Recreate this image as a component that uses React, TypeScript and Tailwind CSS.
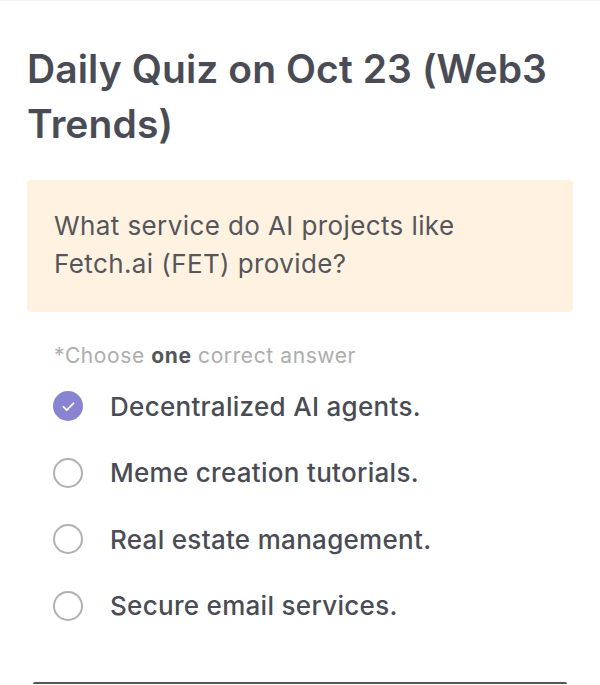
import React, { useState } from 'react';

const options = [
  'Decentralized AI agents.',
  'Meme creation tutorials.',
  'Real estate management.',
  'Secure email services.',
];

const Radio = ({ checked }: { checked: boolean }) =>
  checked ? (
    <span className="flex h-[30px] w-[30px] shrink-0 items-center justify-center rounded-full bg-[#8884d2]">
      <svg width="17" height="17" viewBox="0 0 24 24" fill="none" stroke="white" strokeWidth="2.6" strokeLinecap="round" strokeLinejoin="round">
        <path d="M5 12.5l4.5 4.5L19 7.5" />
      </svg>
    </span>
  ) : (
    <span className="h-[30px] w-[30px] shrink-0 rounded-full border-2 border-[#b0b0b0]" />
  );

export default function App() {
  const [selected, setSelected] = useState(0);

  return (
    <div className="h-[685px] overflow-hidden bg-white font-['Inter',sans-serif] border-t border-[#f2f2f2]">
      <div className="px-[27px]">
        <h1 className="mt-[40px] text-[39px] font-semibold leading-[55px] tracking-[0.1px] text-[#4a4c55]">
          Daily Quiz on Oct 23 (Web3 Trends)
        </h1>

        <div className="mt-[29px] rounded-[3px] bg-[#fff2e0] px-[27px] pt-[27px] pb-[29px]">
          <p className="text-[26px] leading-[38px] font-normal tracking-[0.4px] text-[#55565c]">
            What service do AI projects like Fetch.ai (FET) provide?
          </p>
        </div>

        <p className="mt-[29px] px-[27px] text-[21px] leading-[30px] tracking-[0.6px] text-[#adadad]">
          *Choose <span className="font-bold text-[#55565c]">one</span> correct answer
        </p>

        <div className="mt-[2px] flex flex-col px-[26px]">
          {options.map((opt, i) => (
            <button
              key={opt}
              onClick={() => setSelected(i)}
              className="flex h-[66.5px] items-center gap-[27px] text-left"
            >
              <Radio checked={selected === i} />
              <span className="text-[26px] font-medium tracking-[0.3px] text-[#4a4c55]">{opt}</span>
            </button>
          ))}
        </div>

        <div className="mx-[6px] mt-[43px] h-[2px] rounded-t bg-[#55565c]" />
      </div>
    </div>
  );
}
